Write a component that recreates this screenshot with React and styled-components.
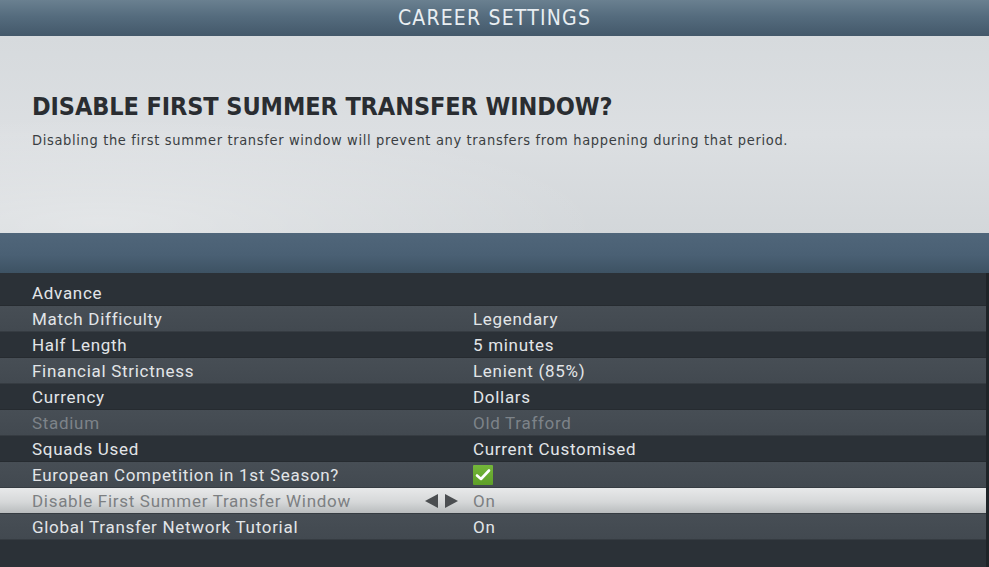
import React from "react";
import styled, { createGlobalStyle } from "styled-components";

const GlobalStyle = createGlobalStyle`
  html, body {
    margin: 0;
    padding: 0;
    background: #2b3137;
  }
`;

const Screen = styled.div`
  width: 989px;
  height: 567px;
  display: flex;
  flex-direction: column;
  overflow: hidden;
  font-family: "DejaVu Sans Condensed", "DejaVu Sans", sans-serif;
`;

const TitleBar = styled.div`
  height: 36px;
  flex-shrink: 0;
  display: flex;
  align-items: center;
  justify-content: center;
  background: linear-gradient(180deg, #6a8090 0%, #556c7e 45%, #43586a 100%);
  color: #e9eef2;
  font-size: 21px;
  letter-spacing: 1.2px;
`;

const InfoPanel = styled.div`
  height: 197px;
  flex-shrink: 0;
  box-sizing: border-box;
  padding: 56px 32px 0;
  background:
    radial-gradient(ellipse at 10% 95%, rgba(255, 255, 255, 0.35), transparent 40%),
    linear-gradient(180deg, #d6dadd 0%, #dcdfe2 50%, #d3d7da 100%);
`;

const Heading = styled.h1`
  margin: 0;
  font-size: 25px;
  line-height: 30px;
  font-weight: bold;
  color: #2a2d31;
  letter-spacing: -0.1px;
`;

const Description = styled.p`
  margin: 9px 0 0;
  font-size: 14.5px;
  line-height: 18px;
  color: #3a3e42;
  letter-spacing: 0.65px;
`;

const Band = styled.div`
  height: 40px;
  flex-shrink: 0;
  background: linear-gradient(180deg, #50667a 0%, #4a6074 55%, #3d5263 100%);
`;

const List = styled.div`
  flex: 1;
  padding-top: 7px;
  background: #2b3137;
  border-right: 3px solid #1f2428;
`;

const rowBg = {
  dark: "#2b3137",
  light: "linear-gradient(180deg, #474e55 0%, #424950 100%)",
  selected: "linear-gradient(180deg, #e8e9ea 0%, #d6d8d9 55%, #b9bcbe 100%)",
};

const Row = styled.div`
  height: 26px;
  box-sizing: border-box;
  display: grid;
  grid-template-columns: 393px 48px 1fr;
  align-items: center;
  padding-left: 32px;
  background: ${(p) => rowBg[p.$tone]};
  border-bottom: 1px solid ${(p) => (p.$tone === "dark" ? "#262b30" : "#363c42")};
  font-family: Roboto, "DejaVu Sans", sans-serif;
  font-size: 17px;
  letter-spacing: 0.7px;
  color: ${(p) =>
    p.$selected ? "#7c7f82" : p.$disabled ? "#7d8389" : "#e2e5e8"};
`;

const Arrows = styled.div`
  display: flex;
  align-items: center;
  gap: 7px;
`;

const Check = styled.div`
  width: 20px;
  height: 20px;
  display: flex;
  align-items: center;
  justify-content: center;
  background: linear-gradient(180deg, #74b63a 0%, #5e9f28 100%);
  border-radius: 1px;
`;

const settings = [
  { label: "Advance", value: "" },
  { label: "Match Difficulty", value: "Legendary" },
  { label: "Half Length", value: "5 minutes" },
  { label: "Financial Strictness", value: "Lenient (85%)" },
  { label: "Currency", value: "Dollars" },
  { label: "Stadium", value: "Old Trafford", disabled: true },
  { label: "Squads Used", value: "Current Customised" },
  { label: "European Competition in 1st Season?", check: true },
  { label: "Disable First Summer Transfer Window", value: "On", selected: true },
  { label: "Global Transfer Network Tutorial", value: "On" },
];

const Triangle = ({ dir }) => (
  <svg width="13" height="14" viewBox="0 0 13 14">
    <path
      d={dir === "left" ? "M0 7 L13 0 L13 14 Z" : "M13 7 L0 0 L0 14 Z"}
      fill="#4b4e51"
    />
  </svg>
);

const App = () => {
  return (
    <Screen>
      <GlobalStyle />
      <TitleBar>CAREER SETTINGS</TitleBar>
      <InfoPanel>
        <Heading>DISABLE FIRST SUMMER TRANSFER WINDOW?</Heading>
        <Description>
          Disabling the first summer transfer window will prevent any transfers from
          happening during that period.
        </Description>
      </InfoPanel>
      <Band />
      <List>
        {settings.map((s, i) => (
          <Row
            key={s.label}
            $tone={s.selected ? "selected" : i % 2 === 1 ? "light" : "dark"}
            $selected={s.selected}
            $disabled={s.disabled}
          >
            <span>{s.label}</span>
            <Arrows>
              {s.selected && (
                <>
                  <Triangle dir="left" />
                  <Triangle dir="right" />
                </>
              )}
            </Arrows>
            {s.check ? (
              <Check>
                <svg width="16" height="14" viewBox="0 0 16 14">
                  <path
                    d="M2 7.5 L6 11 L14 2.5"
                    fill="none"
                    stroke="#ffffff"
                    strokeWidth="2.6"
                    strokeLinecap="round"
                    strokeLinejoin="round"
                  />
                </svg>
              </Check>
            ) : (
              <span>{s.value}</span>
            )}
          </Row>
        ))}
      </List>
    </Screen>
  );
};

export default App;
